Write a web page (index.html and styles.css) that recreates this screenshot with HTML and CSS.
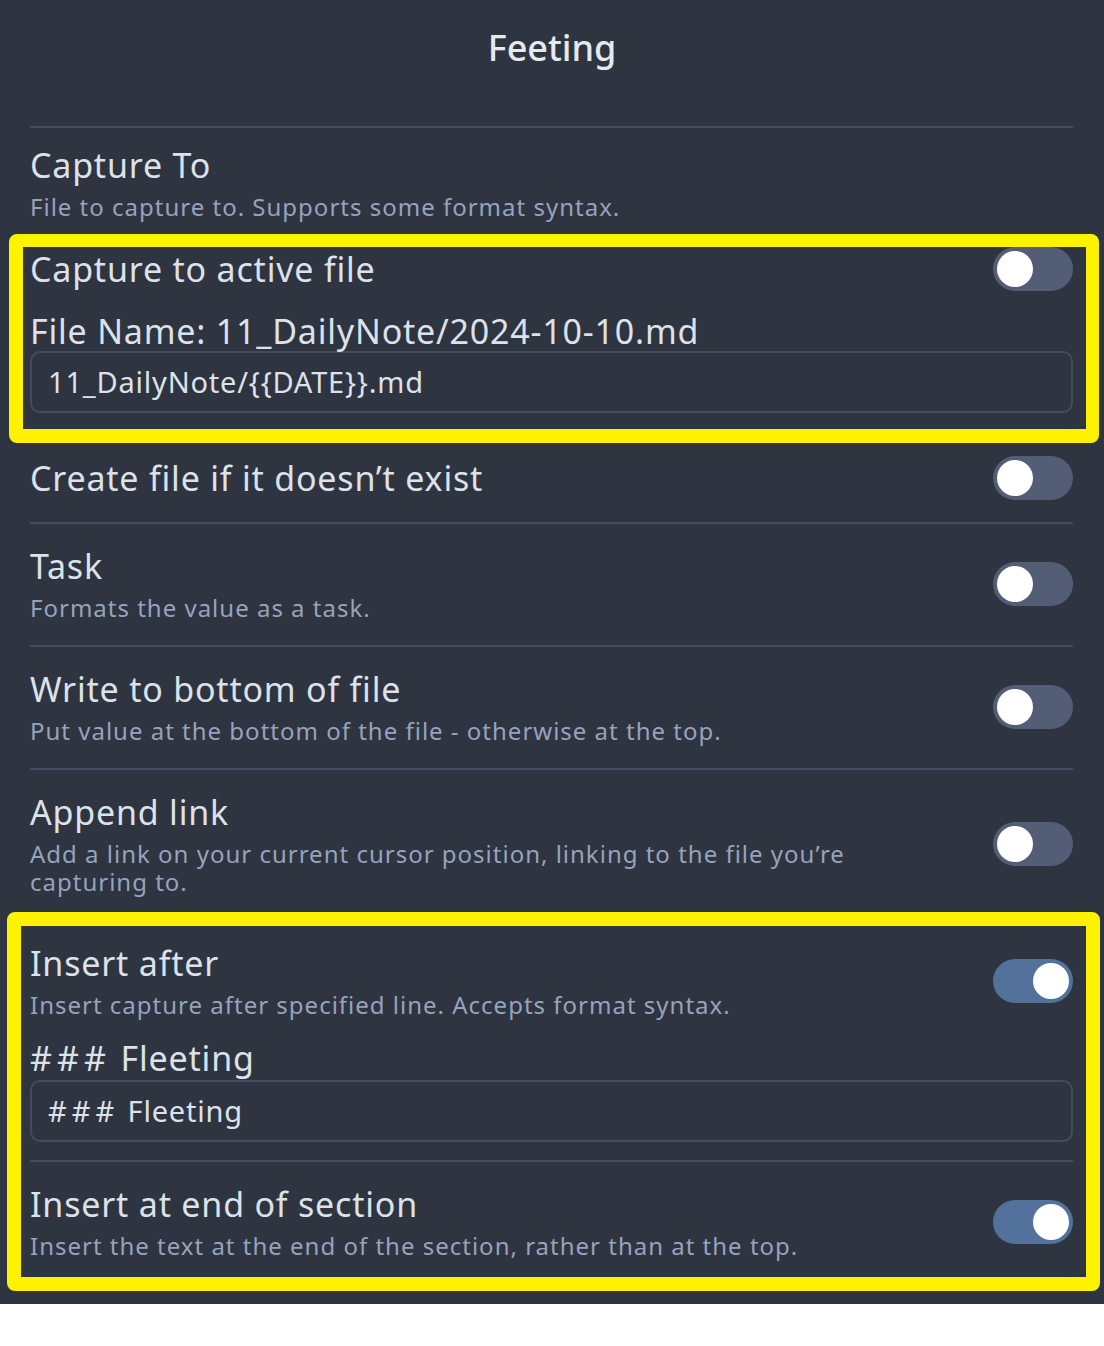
FILE: index.html
```html
<!DOCTYPE html>
<html lang="en">
<head>
<meta charset="utf-8">
<title>Feeting</title>
<link rel="stylesheet" href="styles.css">
</head>
<body>
<div class="modal">
  <h1 class="modal-title">Feeting</h1>

  <div class="setting-item first">
    <div class="info">
      <div class="name">Capture To</div>
      <div class="desc">File to capture to. Supports some format syntax.</div>
    </div>
  </div>

  <div class="setting-item plain active-file">
    <div class="info"><div class="name">Capture to active file</div></div>
    <div class="toggle"><span class="knob"></span></div>
  </div>

  <div class="field file-field">
    <div class="field-label">File Name: 11_DailyNote/2024-10-10.md</div>
    <div class="text-input">11_DailyNote/{{DATE}}.md</div>
  </div>

  <div class="setting-item plain create-row">
    <div class="info"><div class="name">Create file if it doesn’t exist</div></div>
    <div class="toggle"><span class="knob"></span></div>
  </div>

  <div class="setting-item">
    <div class="info">
      <div class="name">Task</div>
      <div class="desc">Formats the value as a task.</div>
    </div>
    <div class="toggle"><span class="knob"></span></div>
  </div>

  <div class="setting-item">
    <div class="info">
      <div class="name">Write to bottom of file</div>
      <div class="desc">Put value at the bottom of the file - otherwise at the top.</div>
    </div>
    <div class="toggle"><span class="knob"></span></div>
  </div>

  <div class="setting-item">
    <div class="info">
      <div class="name">Append link</div>
      <div class="desc">Add a link on your current cursor position, linking to the file you’re capturing to.</div>
    </div>
    <div class="toggle"><span class="knob"></span></div>
  </div>

  <div class="setting-item insert-after">
    <div class="info">
      <div class="name">Insert after</div>
      <div class="desc">Insert capture after specified line. Accepts format syntax.</div>
    </div>
    <div class="toggle on"><span class="knob"></span></div>
  </div>

  <div class="field fleeting-field">
    <div class="field-label"><span class="hashes">###</span> Fleeting</div>
    <div class="text-input"><span class="hashes">###</span> Fleeting</div>
  </div>

  <div class="setting-item">
    <div class="info">
      <div class="name">Insert at end of section</div>
      <div class="desc">Insert the text at the end of the section, rather than at the top.</div>
    </div>
    <div class="toggle on"><span class="knob"></span></div>
  </div>

  <div class="highlight highlight-top"></div>
  <div class="highlight highlight-bottom"></div>
</div>
</body>
</html>
```

FILE: styles.css
```css
* { box-sizing: border-box; }

html, body {
  margin: 0;
  padding: 0;
  background: #ffffff;
}

body {
  font-family: "Noto Sans", "Open Sans", sans-serif;
  color: #d8dee9;
}

.modal {
  position: relative;
  height: 1304px;
  background: #2e3440;
  padding: 26px 31px 0 30px;
}

.modal-title {
  margin: 0 0 56px;
  font-size: 36px;
  line-height: 44px;
  font-weight: 500;
  text-align: center;
  color: #e5e9f0;
  padding-left: 1px;
}

.setting-item {
  display: flex;
  align-items: center;
  gap: 60px;
  padding: 22px 0 23px;
  border-top: 2px solid #434c5e;
}

.setting-item.plain {
  border-top: none;
}

.setting-item.first {
  padding: 17px 0 13px;
}

.setting-item.active-file {
  padding: 13px 0 20px;
}

.setting-item.create-row {
  padding: 23px 0 22px;
}

.setting-item.insert-after {
  padding-bottom: 19px;
}

.info {
  flex: 1;
  min-width: 0;
}

.name {
  font-size: 34px;
  line-height: 40px;
  letter-spacing: 0.8px;
  color: #dde2ea;
}

.desc {
  margin-top: 8px;
  font-size: 24px;
  line-height: 28px;
  letter-spacing: 1px;
  color: #97a3bd;
}

.field-label {
  font-size: 34px;
  line-height: 40px;
  letter-spacing: 0.8px;
  color: #dde2ea;
}

.text-input {
  height: 62px;
  border: 2px solid #434c5e;
  border-radius: 10px;
  padding: 0 16px;
  font-size: 29px;
  line-height: 58px;
  letter-spacing: 0.8px;
  color: #dde2ea;
}

.hashes {
  letter-spacing: 5px;
}

.file-field {
  margin-bottom: 20px;
}

.fleeting-field {
  margin-bottom: 18px;
}

.fleeting-field .text-input {
  margin-top: 2px;
}

.toggle {
  flex: none;
  position: relative;
  width: 80px;
  height: 44px;
  border-radius: 22px;
  background: #535d76;
}

.toggle .knob {
  position: absolute;
  top: 4px;
  left: 4px;
  width: 36px;
  height: 36px;
  border-radius: 50%;
  background: #ffffff;
}

.toggle.on {
  background: #52719b;
}

.toggle.on .knob {
  left: 40px;
}

.highlight {
  position: absolute;
  border: 14px solid #fff200;
  border-radius: 8px;
  pointer-events: none;
}

.highlight-top {
  left: 9px;
  top: 234px;
  width: 1090px;
  height: 209px;
  border-width: 13px 13px 14px 14px;
}

.highlight-bottom {
  left: 7px;
  top: 912px;
  width: 1093px;
  height: 379px;
}
```
